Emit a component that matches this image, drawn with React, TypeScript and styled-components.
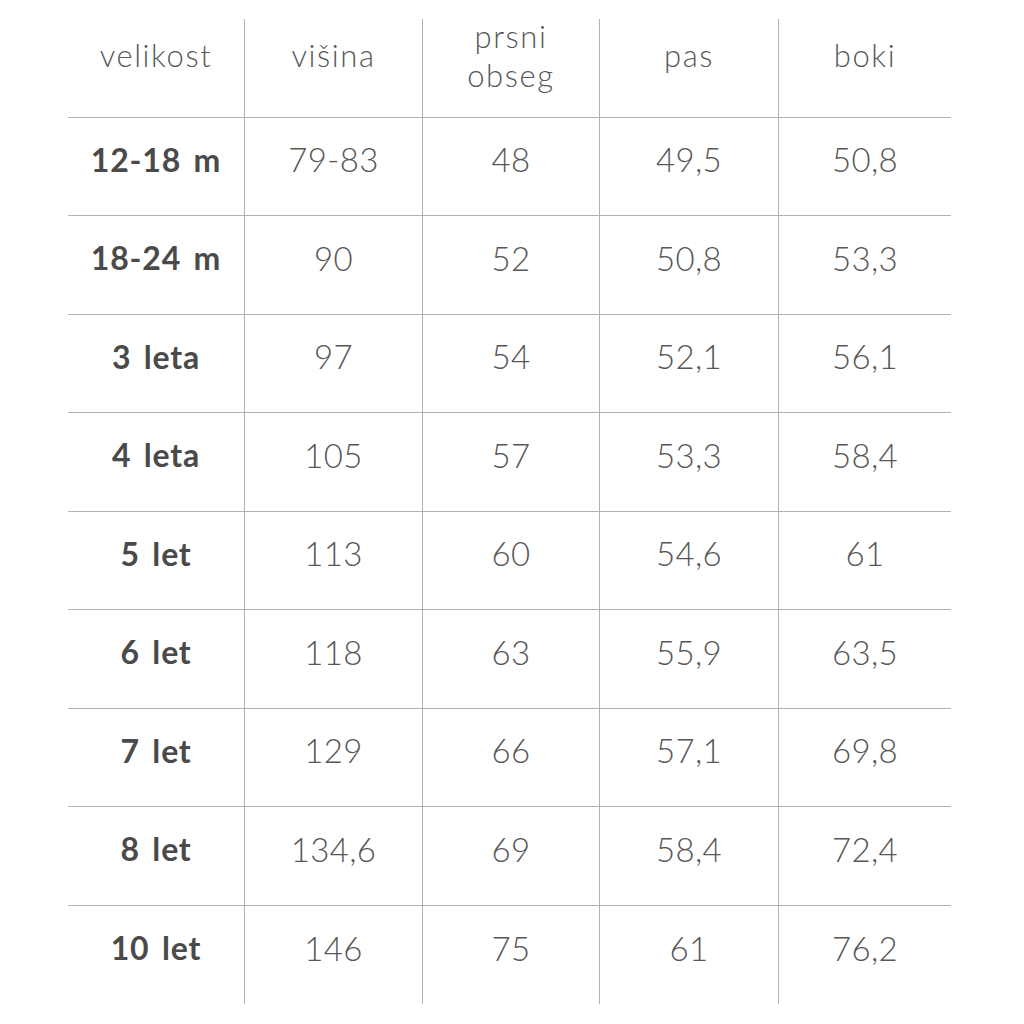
import React from "react";
import styled, { createGlobalStyle } from "styled-components";

const Global = createGlobalStyle`
  html, body { margin: 0; padding: 0; background: #ffffff; }
  body { font-family: Lato, "Liberation Sans", sans-serif; }
`;

const Page = styled.div`
  width: 1024px;
  height: 1024px;
  padding-top: 19px;
  padding-left: 68px;
  box-sizing: border-box;
`;

const Grid = styled.div`
  display: grid;
  grid-template-columns: 177px 178px 177px 179px 172px;
  grid-template-rows: repeat(10, 98.5px);
`;

const Cell = styled.div<{ $lastCol: boolean; $lastRow: boolean; $head?: boolean; $bold?: boolean }>`
  display: flex;
  align-items: center;
  justify-content: center;
  text-align: center;
  box-sizing: border-box;
  border-right: ${(p) => (p.$lastCol ? "none" : "1px solid #b3b3b3")};
  border-bottom: ${(p) => (p.$lastRow ? "none" : "1px solid #b3b3b3")};
  color: ${(p) => (p.$bold ? "#4a4a4a" : "#575757")};
  font-weight: ${(p) => (p.$bold ? 700 : 300)};
  font-size: ${(p) => (p.$head ? "31px" : p.$bold ? "32px" : "33px")};
  letter-spacing: ${(p) => (p.$head ? "1.6px" : p.$bold ? "0.8px" : "0.3px")};
  word-spacing: ${(p) => (p.$bold ? "4px" : "0")};
  line-height: ${(p) => (p.$head ? 1.25 : 1.1)};
  padding-bottom: ${(p) => (p.$head ? "24px" : "14px")};
`;

const header = ["velikost", "višina", "prsni\nobseg", "pas", "boki"];
const rows: string[][] = [
  ["12-18 m", "79-83", "48", "49,5", "50,8"],
  ["18-24 m", "90", "52", "50,8", "53,3"],
  ["3 leta", "97", "54", "52,1", "56,1"],
  ["4 leta", "105", "57", "53,3", "58,4"],
  ["5 let", "113", "60", "54,6", "61"],
  ["6 let", "118", "63", "55,9", "63,5"],
  ["7 let", "129", "66", "57,1", "69,8"],
  ["8 let", "134,6", "69", "58,4", "72,4"],
  ["10 let", "146", "75", "61", "76,2"],
];

export default function App() {
  return (
    <>
      <Global />
      <Page>
        <Grid>
          {header.map((h, i) => (
            <Cell key={"h" + i} $head $lastCol={i === 4} $lastRow={false}>
              <span style={{ whiteSpace: "pre-line" }}>{h}</span>
            </Cell>
          ))}
          {rows.map((r, ri) =>
            r.map((c, ci) => (
              <Cell
                key={ri + "-" + ci}
                $bold={ci === 0}
                $lastCol={ci === 4}
                $lastRow={ri === rows.length - 1}
              >
                {c}
              </Cell>
            ))
          )}
        </Grid>
      </Page>
    </>
  );
}
